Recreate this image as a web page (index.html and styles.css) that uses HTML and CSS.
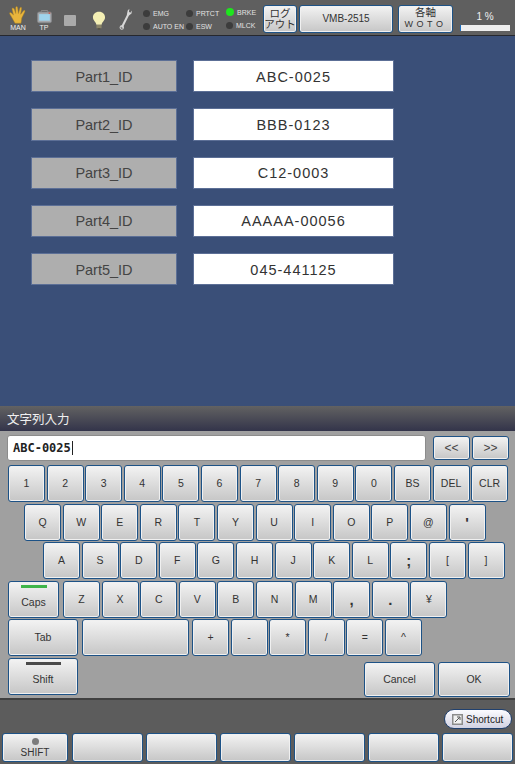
FILE: index.html
```html
<!DOCTYPE html>
<html lang="ja">
<head>
    <meta charset="UTF-8">
    <meta name="viewport" content="width=device-width, initial-scale=1.0">
    <title>文字列入力</title>
    <link rel="stylesheet" href="styles.css">
</head>
<body>
    <div class="topbar">
        <div class="mode mode-man">
            <svg width="20" height="18" viewBox="0 0 26 24"><path d="M9 23 L4 14 C3 12 1 10 2 9 C3 8 5 10 7 12 L5 4 C5 2 7 2 8 4 L10 10 L10 2 C10 0 12 0 12.500 2 L13.500 10 L15.500 3 C16 1 18 1.500 17.800 3.500 L16.500 11 L20 6.500 C21.500 5 23 6 22 8 L18 16 L17 23 Z" fill="#e8b53c" stroke="#a87d20" stroke-width=".6"/></svg>
            <span>MAN</span>
        </div>
        <div class="mode mode-tp">
            <svg width="17" height="14" viewBox="0 0 18 17"><rect x="5" y="0.500" width="8" height="4" rx="1" fill="none" stroke="#9a9a9a"/><rect x="0.500" y="2.500" width="17" height="13" rx="2" fill="#a4a6aa" stroke="#85878a"/><rect x="2.500" y="5" width="13" height="8" fill="#9fd4ec"/><rect x="14" y="3" width="2" height="1.500" fill="#d04a3a"/></svg>
            <span>TP</span>
        </div>
        <div class="stop-lamp"></div>
        <svg class="bulb" width="14" height="19" viewBox="0 0 16 22"><path d="M8 1 C3.500 1 1 4 1 7.500 C1 11 4.500 12.500 5 16 L11 16 C11.500 12.500 15 11 15 7.500 C15 4 12.500 1 8 1 Z" fill="#f4efb4"/><rect x="5" y="16" width="6" height="4" fill="#8a8468"/><rect x="6.500" y="20" width="3" height="1.500" fill="#55523f"/></svg>
        <svg class="wrench" width="14" height="22" viewBox="0 0 16 26"><path d="M3 23 L11 7" stroke="#d8d8d8" stroke-width="2.400" fill="none"/><path d="M9 8 L10 3 L12 1 L11.500 4.500 L13 5.500 L15 3 L14.500 6.500 L11.500 9 Z" fill="#d8d8d8"/><circle cx="3" cy="23" r="2" fill="none" stroke="#d8d8d8" stroke-width="1.200"/></svg>
        <div class="leds">
            <div class="led"><i></i>EMG</div>
            <div class="led"><i></i>AUTO EN</div>
        </div>
        <div class="leds leds-prtct">
            <div class="led"><i></i>PRTCT</div>
            <div class="led"><i></i>ESW</div>
        </div>
        <div class="leds leds-brke">
            <div class="led"><i class="on"></i>BRKE</div>
            <div class="led"><i></i>MLCK</div>
        </div>
        <button class="key btn-logout">ログ<br>アウト</button>
        <button class="key btn-model">VMB-2515</button>
        <button class="key btn-axis">各軸<br><span>WOTO</span></button>
        <div class="override">
            <span>1 %</span>
            <div class="override-bar"><div class="override-fill" style="width: 2%"></div></div>
        </div>
    </div>

    <div class="main">
        <div class="part-row"><div class="part-label">Part1_ID</div><div class="part-value">ABC-0025</div></div>
        <div class="part-row"><div class="part-label">Part2_ID</div><div class="part-value">BBB-0123</div></div>
        <div class="part-row"><div class="part-label">Part3_ID</div><div class="part-value">C12-0003</div></div>
        <div class="part-row"><div class="part-label">Part4_ID</div><div class="part-value">AAAAA-00056</div></div>
        <div class="part-row"><div class="part-label">Part5_ID</div><div class="part-value">045-441125</div></div>
    </div>

    <div class="kb-title">文字列入力</div>
    <div class="keyboard">
        <div class="input-row">
            <div class="text-input">ABC-0025<span class="caret"></span></div>
            <button class="key arrow">&lt;&lt;</button>
            <button class="key arrow">&gt;&gt;</button>
        </div>
        <div class="kb-row">
            <button class="key">1</button><button class="key">2</button><button class="key">3</button><button class="key">4</button><button class="key">5</button><button class="key">6</button><button class="key">7</button><button class="key">8</button><button class="key">9</button><button class="key">0</button><button class="key">BS</button><button class="key">DEL</button><button class="key">CLR</button>
        </div>
        <div class="kb-row row-q">
            <button class="key">Q</button><button class="key">W</button><button class="key">E</button><button class="key">R</button><button class="key">T</button><button class="key">Y</button><button class="key">U</button><button class="key">I</button><button class="key">O</button><button class="key">P</button><button class="key">@</button><button class="key big">'</button>
        </div>
        <div class="kb-row row-a">
            <button class="key">A</button><button class="key">S</button><button class="key">D</button><button class="key">F</button><button class="key">G</button><button class="key">H</button><button class="key">J</button><button class="key">K</button><button class="key">L</button><button class="key big">;</button><button class="key">[</button><button class="key">]</button>
        </div>
        <div class="kb-row">
            <button class="key caps"><i class="bar bar-green"></i>Caps</button>
            <button class="key">Z</button><button class="key">X</button><button class="key">C</button><button class="key">V</button><button class="key">B</button><button class="key">N</button><button class="key">M</button><button class="key big">,</button><button class="key big">.</button><button class="key">¥</button>
        </div>
        <div class="kb-row">
            <button class="key wide">Tab</button>
            <button class="key space"></button>
            <button class="key">+</button><button class="key">-</button><button class="key">*</button><button class="key">/</button><button class="key">=</button><button class="key">^</button>
        </div>
        <div class="kb-row last-row">
            <button class="key wide shift"><i class="bar bar-dark"></i>Shift</button>
            <div class="actions">
                <button class="key action">Cancel</button>
                <button class="key action action-ok">OK</button>
            </div>
        </div>
    </div>

    <div class="bottombar">
        <div class="shortcut-row">
            <button class="shortcut"><svg width="11" height="11" viewBox="0 0 11 11"><rect width="11" height="11" fill="#8c8c8c"/><rect x="1.500" y="1.500" width="8" height="8" fill="#f2f2f2"/><path d="M3 8 L7.500 3.500 M5 3 L8 3 L8 6" stroke="#555" fill="none"/></svg>Shortcut</button>
        </div>
        <div class="fkeys">
            <button class="key fkey fkey-shift"><i class="fkey-led"></i>SHIFT</button>
            <button class="key fkey"></button>
            <button class="key fkey"></button>
            <button class="key fkey"></button>
            <button class="key fkey"></button>
            <button class="key fkey"></button>
            <button class="key fkey"></button>
        </div>
    </div>
</body>
</html>
```

FILE: styles.css
```css
html, body {
    margin: 0;
    padding: 0;
}
body {
    width: 515px;
    height: 764px;
    overflow: hidden;
    font-family: "Liberation Sans", "Noto Sans CJK JP", sans-serif;
    background: #5c5c5c;
}
i {
    display: block;
}

/* shared button look */
.key {
    position: relative;
    box-sizing: border-box;
    flex: none;
    width: 37px;
    height: 37px;
    margin: 0;
    padding: 0;
    border: 1px solid #1d5286;
    border-radius: 3px;
    background: linear-gradient(#f3f3f3, #c6c6c6);
    box-shadow: inset 0 0 0 1px #f0f0f0;
    color: #333;
    font-family: "Liberation Sans", "Noto Sans CJK JP", sans-serif;
    font-size: 10.500px;
    line-height: 1;
}
.big {
    font-size: 15px;
    font-weight: bold;
}

/* top status bar */
.topbar {
    box-sizing: border-box;
    display: flex;
    align-items: center;
    height: 36px;
    border-bottom: 1px solid #26282e;
    background: #5f5f5f;
}
.mode {
    display: flex;
    flex-direction: column;
    align-items: center;
    align-self: flex-end;
    margin-bottom: 3px;
    color: #eee;
    font-size: 7px;
    line-height: 8px;
}
.mode-man {
    width: 20px;
    margin-left: 8px;
}
.mode-tp {
    width: 18px;
    margin-left: 7px;
}
.stop-lamp {
    width: 12px;
    height: 11px;
    margin-left: 11px;
    margin-top: 6px;
    border-radius: 1px;
    background: #aaa;
}
.bulb {
    margin-left: 16px;
    margin-top: 6px;
}
.wrench {
    margin-left: 13px;
    margin-top: 3px;
}
.leds {
    display: flex;
    flex-direction: column;
    gap: 5px;
    width: 43px;
    margin-left: 10px;
    margin-top: 4px;
}
.leds-prtct {
    width: 40px;
    margin-left: 0;
}
.leds-brke {
    width: 36px;
    margin-left: 0;
    margin-top: 2px;
}
.led {
    display: flex;
    align-items: center;
    gap: 3px;
    height: 8px;
    color: #e2e2e2;
    font-size: 7px;
    white-space: nowrap;
}
.led i {
    flex: none;
    width: 7px;
    height: 7px;
    border-radius: 50%;
    background: #3c3c3c;
}
.led i.on {
    width: 8px;
    height: 8px;
    background: #1ee51e;
}
.btn-logout {
    width: 34px;
    height: 28px;
    margin-left: 1px;
    margin-top: 2px;
    font-size: 10.500px;
    line-height: 11px;
}
.btn-model {
    width: 94px;
    height: 28px;
    margin-left: 2px;
    margin-top: 2px;
    font-size: 10px;
}
.btn-axis {
    width: 55px;
    height: 28px;
    margin-left: 5px;
    margin-top: 2px;
    font-size: 10.500px;
    line-height: 11px;
}
.btn-axis span {
    font-size: 9px;
    letter-spacing: 3.500px;
}
.override {
    display: flex;
    flex-direction: column;
    align-items: center;
    gap: 2px;
    width: 50px;
    margin-left: 7px;
    margin-top: 7px;
    color: #f0f0f0;
    font-size: 10px;
    line-height: 12px;
}
.override-bar {
    width: 50px;
    height: 6px;
    background: #efefef;
}
.override-fill {
    height: 100%;
    background: #1d6fc0;
}

/* part id list */
.main {
    box-sizing: border-box;
    display: flex;
    flex-direction: column;
    gap: 16px;
    height: 370px;
    padding: 24px 0 0 31px;
    background: #3a4f78;
}
.part-row {
    display: flex;
    gap: 16px;
    height: 32.250px;
}
.part-label,
.part-value {
    display: flex;
    align-items: center;
    justify-content: center;
    box-sizing: border-box;
    padding-top: 1px;
    border: 1px solid #5c6f96;
    font-size: 14.500px;
}
.part-label {
    width: 146px;
    background: #aeaeae;
    color: #444;
}
.part-value {
    width: 201px;
    background: #fff;
    color: #333;
    letter-spacing: 1px;
}

/* keyboard */
.kb-title {
    box-sizing: border-box;
    height: 25px;
    padding: 4px 0 0 7px;
    background: linear-gradient(#626262, #33344a);
    color: #f0f0f0;
    font-family: "Noto Sans CJK JP", sans-serif;
    font-size: 12.500px;
    line-height: 17px;
}
.keyboard {
    box-sizing: border-box;
    height: 269px;
    padding: 4px 0 0 8px;
    border-bottom: 2px solid #404040;
    background: #a0a0a0;
}
.input-row {
    display: flex;
    align-items: center;
    height: 26px;
    margin: 0 0 4px -1px;
}
.text-input {
    box-sizing: border-box;
    display: flex;
    align-items: center;
    width: 419px;
    height: 26px;
    margin-right: 7px;
    padding-left: 5px;
    border: 1px solid #8c8c8c;
    border-radius: 3px;
    background: #fff;
    color: #222;
    font-family: "DejaVu Sans Mono", monospace;
    font-size: 12px;
    font-weight: bold;
}
.caret {
    width: 1px;
    height: 14px;
    margin-left: 1px;
    background: #222;
}
.arrow {
    width: 37px;
    height: 24px;
    margin-right: 2px;
    color: #444;
    font-size: 12px;
}
.kb-row {
    display: flex;
    gap: 1.600px;
    height: 37px;
    margin-bottom: 1.500px;
}
.row-q {
    padding-left: 16px;
}
.row-a {
    padding-left: 35px;
}
.kb-row .caps {
    width: 51px;
    margin-right: 2.400px;
    padding-top: 6px;
}
.kb-row .wide {
    width: 70px;
    margin-right: 2.400px;
}
.kb-row .space {
    width: 107px;
    margin-right: 1.400px;
}
.shift {
    padding-top: 6px;
}
.bar {
    position: absolute;
    top: 3px;
    height: 3px;
}
.bar-green {
    left: 12px;
    width: 26px;
    background: #3fb54a;
}
.bar-dark {
    left: 17px;
    width: 35px;
    background: #4a4a4a;
}
.actions {
    display: flex;
    gap: 3px;
    margin: 4px 0 0 282px;
}
.kb-row .action {
    width: 71px;
    height: 35px;
}
.kb-row .action-ok {
    width: 72px;
}

/* bottom bar */
.bottombar {
    box-sizing: border-box;
    height: 64px;
    background: #5c5c5c;
}
.shortcut-row {
    display: flex;
    justify-content: flex-end;
    padding: 9px 3px 0 0;
    height: 33px;
    box-sizing: border-box;
}
.shortcut {
    display: flex;
    align-items: center;
    gap: 3px;
    box-sizing: border-box;
    width: 68px;
    height: 20px;
    padding: 0 0 0 7px;
    border: 1px solid #20406e;
    border-radius: 10px;
    background: linear-gradient(#fbfbff, #d2d2e2);
    color: #222;
    font-family: "Liberation Sans", sans-serif;
    font-size: 10px;
}
.fkeys {
    display: flex;
    gap: 3px;
    padding-left: 2px;
}
.fkey {
    width: 71px;
    height: 29px;
}
.fkey-shift {
    width: 66px;
    padding-top: 11px;
    margin-right: 1px;
    font-size: 10px;
}
.fkey-led {
    position: absolute;
    top: 4px;
    left: 29px;
    width: 7px;
    height: 7px;
    border-radius: 50%;
    background: #7c7c7c;
}
```
